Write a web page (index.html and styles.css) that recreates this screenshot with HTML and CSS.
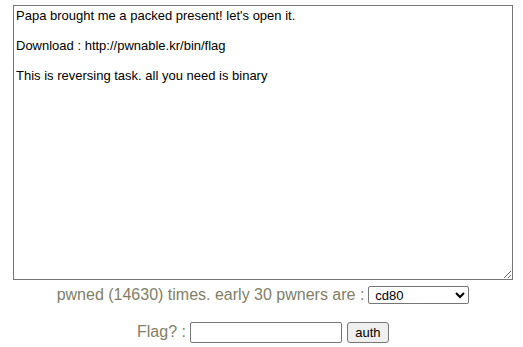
FILE: index.html
```html
<!DOCTYPE html>
<html>
<head>
<meta charset="utf-8">
<link rel="stylesheet" href="styles.css">
</head>
<body>
<div class="page">
<textarea class="desc" readonly>Papa brought me a packed present! let's open it.

Download : http://pwnable.kr/bin/flag

This is reversing task. all you need is binary</textarea>
<div class="row pwned">pwned (14630) times. early 30 pwners are : <select class="sel"><option>cd80</option></select></div>
<div class="row flag">Flag? : <input class="inp" type="text"> <button class="btn">auth</button></div>
</div>
</body>
</html>
```
FILE: styles.css
```css
html, body { margin: 0; padding: 0; background: #fff; }
.page {
  display: flex;
  flex-direction: column;
  align-items: center;
  padding-top: 5px;
  padding-left: 3px;
  font-family: "Liberation Sans", Arial, sans-serif;
}
.desc {
  box-sizing: border-box;
  width: 500px;
  height: 275px;
  margin: 0;
  padding: 2px;
  border: 1px solid #767676;
  font-family: "Liberation Sans", Arial, sans-serif;
  font-size: 13px;
  line-height: 15px;
  color: #000;
  resize: both;
}
.row {
  color: #808066;
  font-size: 16px;
  display: flex;
  align-items: center;
}
.pwned { margin-top: 6px; height: 18px; }
.sel {
  box-sizing: border-box;
  width: 101px;
  height: 18px;
  margin-left: 4px;
  font-family: "Liberation Sans", Arial, sans-serif;
  font-size: 13px;
  border: 1px solid #767676;
  border-radius: 2px;
  background: #fff;
  color: #000;
  padding: 0 2px;
}
.flag { margin-top: 17px; height: 22px; }
.inp {
  box-sizing: border-box;
  width: 152px;
  height: 21px;
  margin: 0 0 0 4px;
  border: 1px solid #767676;
  border-radius: 2px;
  padding: 1px 2px;
}
.btn {
  box-sizing: border-box;
  height: 21px;
  width: 42px;
  margin-left: 5px;
  font-family: "Liberation Sans", Arial, sans-serif;
  font-size: 13px;
  background: #efefef;
  border: 1px solid #767676;
  border-radius: 3px;
  color: #000;
  padding: 0;
}
```
